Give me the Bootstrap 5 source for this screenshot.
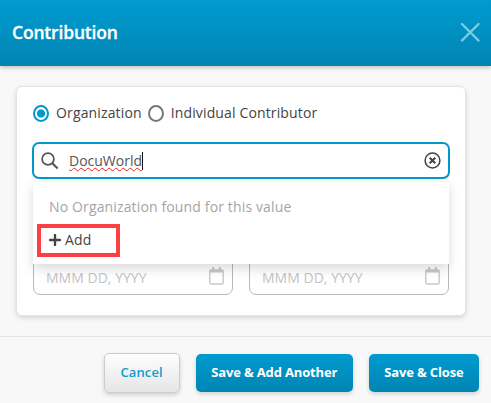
<!DOCTYPE html>
<html lang="en">
<head>
<meta charset="utf-8">
<meta name="viewport" content="width=device-width, initial-scale=1">
<title>Contribution</title>
<link href="https://cdn.jsdelivr.net/npm/bootstrap@5.3.0/dist/css/bootstrap.min.css" rel="stylesheet">
<style>
body{font-family:"Open Sans","Noto Sans",sans-serif;font-size:14px;line-height:20px;letter-spacing:.14px;color:#444;background:#f8f8f8;height:403px;overflow:hidden}
.dlg-head{height:66px;padding:0 10px 2px 12px;background:linear-gradient(#009bd0,#0085b3);box-shadow:0 1px 5px rgba(0,0,0,.28)}
.dlg-title{font-size:17.5px;font-weight:600;line-height:24px;letter-spacing:-.18px;-webkit-text-stroke:.3px #fff}
.dlg-body{height:270px;padding:20px 25px 0 16px}
.panel{height:230px;padding:16px;border:1px solid #e4e4e6;border-radius:6px;box-shadow:0 2px 5px rgba(0,0,0,.15)}
.choices{height:39px;gap:6px}
.choice{gap:7px}
.choice input{width:16px;height:17px;margin:0;border:2px solid #777;background:#fff}
.choice input:checked{border-color:#0099cb;background:radial-gradient(circle,#0099cb 3.7px,#fff 4.5px)}
.search{height:37px;margin:0 -1px 1px;padding:0 7px;border:2px solid #0099cb;border-radius:7px}
.query{margin-left:10px;padding-top:1px;letter-spacing:0;color:#555;text-decoration:underline wavy #e2231a 1px;text-underline-offset:1px;text-decoration-skip-ink:none}
.caret{width:1px;height:18px;background:#111}
.results{top:39px;left:0;width:416px;height:83px;padding:15px 16px 0;z-index:2;background:#fff;border-top:1px solid #f5f5f5;border-radius:3px 3px 0 0;box-shadow:0 5px 12px rgba(0,0,0,.14)}
.none-found{color:#a5a5a5}
.add-row{margin-top:13px;gap:4px}
.callout{left:4px;top:42px;width:83px;height:33px;border:4px solid #fb4144}
.dates{margin-top:78px}
.date{height:38px;padding:3px 8px 0 12px;border:1px solid #b8b8b8;border-radius:7px;letter-spacing:.02px;color:#c4c4c4}
.date svg{margin-top:-4px}
.dlg-foot{height:67px;padding:17px 12px 0;gap:16px;border-top:1px solid #e3e3e3}
.act{height:38px;padding:0 15.5px 2px;border:0;border-radius:5px;font-size:13px;font-weight:700;line-height:36px;letter-spacing:-.15px;color:#fff;background:linear-gradient(#009bd0,#0085b3);box-shadow:0 2px 4px rgba(0,0,0,.16)}
.act:hover{color:#fff}
.act-plain,.act-plain:hover{height:40px;margin-top:-1px;padding:0 16px 2px;border:1px solid #ccc;font-weight:600;letter-spacing:.1px;color:#129cc9;background:linear-gradient(#fefefe,#e5e5e5)}
</style>
</head>
<body class="d-flex flex-column">
<header class="dlg-head d-flex align-items-center justify-content-between flex-shrink-0 text-white">
  <h1 class="dlg-title m-0">Contribution</h1>
  <svg width="22" height="22" viewBox="0 0 22 22" stroke="#83c9e3" stroke-width="2.4" stroke-linecap="round"><path d="M3 3 19.5 19.5M19.5 3 3 19.5"/></svg>
</header>
<main class="dlg-body flex-shrink-0">
  <section class="panel bg-white">
    <div class="choices d-flex align-items-start">
      <label class="choice d-flex align-items-center"><input class="form-check-input" type="radio" name="who" checked><span>Organization</span></label>
      <label class="choice d-flex align-items-center"><input class="form-check-input" type="radio" name="who"><span>Individual Contributor</span></label>
    </div>
    <div class="position-relative">
      <div class="search d-flex align-items-center bg-white">
        <svg width="18" height="18" viewBox="0 0 18 18" fill="none" stroke="#555" stroke-width="1.7"><circle cx="7" cy="7" r="5.9"/><path d="m11.3 11.3 5.4 5.2" stroke-width="2.1"/></svg>
        <span class="query">DocuWorld</span><span class="caret"></span>
        <svg class="ms-auto" width="17" height="17" viewBox="0 0 17 17" fill="none" stroke="#444" stroke-width="1.5"><circle cx="8.5" cy="8.5" r="7.4"/><path d="m5.7 5.7 5.6 5.6m0-5.6-5.6 5.6" stroke-width="2"/></svg>
      </div>
      <div class="results position-absolute">
        <div class="none-found">No Organization found for this value</div>
        <div class="add-row d-flex align-items-center">
          <svg width="12" height="12" viewBox="0 0 12 12" stroke="#444" stroke-width="2.4" stroke-linecap="round"><path d="M6 1v10M1 6h10"/></svg>
          <span>Add</span>
        </div>
        <div class="callout position-absolute"></div>
      </div>
    </div>
    <div class="dates d-flex gap-3">
      <div class="date d-flex align-items-center justify-content-between flex-fill"><span>MMM DD, YYYY</span>
        <svg width="15" height="18" viewBox="0 0 15 18" fill="none" stroke="#c9c9c9" stroke-width="1.4"><rect x=".8" y="3" width="13.4" height="14" rx="1.3"/><path d="M1 4.2h13" stroke-width="2.6"/><path d="M4.2 0v4M10.8 0v4" stroke-width="2"/></svg></div>
      <div class="date d-flex align-items-center justify-content-between flex-fill"><span>MMM DD, YYYY</span>
        <svg width="15" height="18" viewBox="0 0 15 18" fill="none" stroke="#c9c9c9" stroke-width="1.4"><rect x=".8" y="3" width="13.4" height="14" rx="1.3"/><path d="M1 4.2h13" stroke-width="2.6"/><path d="M4.2 0v4M10.8 0v4" stroke-width="2"/></svg></div>
    </div>
  </section>
</main>
<footer class="dlg-foot d-flex justify-content-end align-items-start flex-shrink-0">
  <button class="btn act act-plain">Cancel</button>
  <button class="btn act">Save &amp; Add Another</button>
  <button class="btn act">Save &amp; Close</button>
</footer>
<script src="https://cdn.jsdelivr.net/npm/bootstrap@5.3.0/dist/js/bootstrap.bundle.min.js"></script>
</body>
</html>
